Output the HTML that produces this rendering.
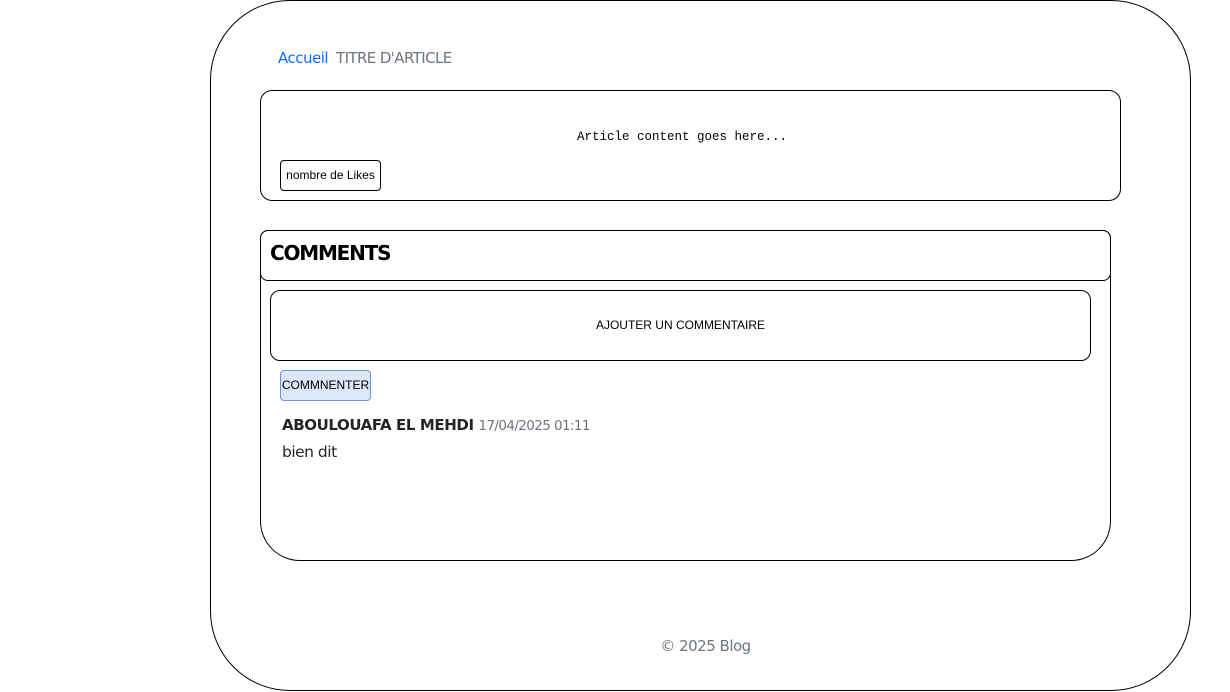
<!DOCTYPE html>
<html><head><style>
body{margin:0;width:1230px;height:692px;background:#fff;font-family:"Liberation Sans","DejaVu Sans",sans-serif;position:relative;overflow:hidden}
.a{position:absolute;box-sizing:border-box}
</style></head><body>
<div class="a" style="left:210px;top:0;width:981px;height:691px;border:1px solid #000;border-radius:80px"></div>
<div class="a" style="left:278px;top:49px;font-size:15px;color:#0d6efd;font-family:'DejaVu Sans',sans-serif;letter-spacing:-0.5px">Accueil</div>
<div class="a" style="left:336px;top:49px;font-size:15px;color:#6c757d;font-family:'DejaVu Sans',sans-serif;letter-spacing:-0.6px">TITRE D'ARTICLE</div>
<div class="a" style="left:260px;top:90px;width:861px;height:111px;border:1px solid #000;border-radius:12px"></div>
<div class="a" style="left:577px;top:130px;font-family:'Liberation Mono',monospace;font-size:12.5px">Article content goes here...</div>
<div class="a" style="left:280px;top:160px;width:101px;height:31px;border:1px solid #000;border-radius:4px;font-size:12px;line-height:29px;text-align:center">nombre de Likes</div>
<div class="a" style="left:260px;top:230px;width:851px;height:331px;border:1px solid #000;border-radius:8px 8px 40px 40px"></div>
<div class="a" style="left:260px;top:230px;width:851px;height:51px;border:1px solid #000;border-radius:8px"></div>
<div class="a" style="left:270px;top:241px;font-size:20px;font-weight:bold;font-family:'DejaVu Sans',sans-serif;letter-spacing:-1.2px">COMMENTS</div>
<div class="a" style="left:270px;top:290px;width:821px;height:71px;border:1px solid #000;border-radius:10px;font-size:12px;line-height:69px;text-align:center">AJOUTER UN COMMENTAIRE</div>
<div class="a" style="left:280px;top:370px;width:91px;height:31px;border:1px solid #6f95d1;background:#dce8f9;border-radius:4px;font-size:12px;line-height:29px;text-align:center">COMMNENTER</div>
<div class="a" style="left:282px;top:416px;font-size:15px;font-weight:bold;color:#212529;font-family:'DejaVu Sans',sans-serif;letter-spacing:-0.4px">ABOULOUAFA EL MEHDI <span style="font-weight:normal;font-size:13.5px;color:#6c757d;letter-spacing:-0.6px">17/04/2025 01:11</span></div>
<div class="a" style="left:282px;top:443px;font-size:15.5px;color:#212529;font-family:'DejaVu Sans',sans-serif;letter-spacing:-0.5px">bien dit</div>
<div class="a" style="left:210px;top:637px;width:991px;text-align:center;font-size:15px;color:#6c757d;font-family:'DejaVu Sans',sans-serif;letter-spacing:-0.5px">© 2025 Blog</div>
</body></html>
